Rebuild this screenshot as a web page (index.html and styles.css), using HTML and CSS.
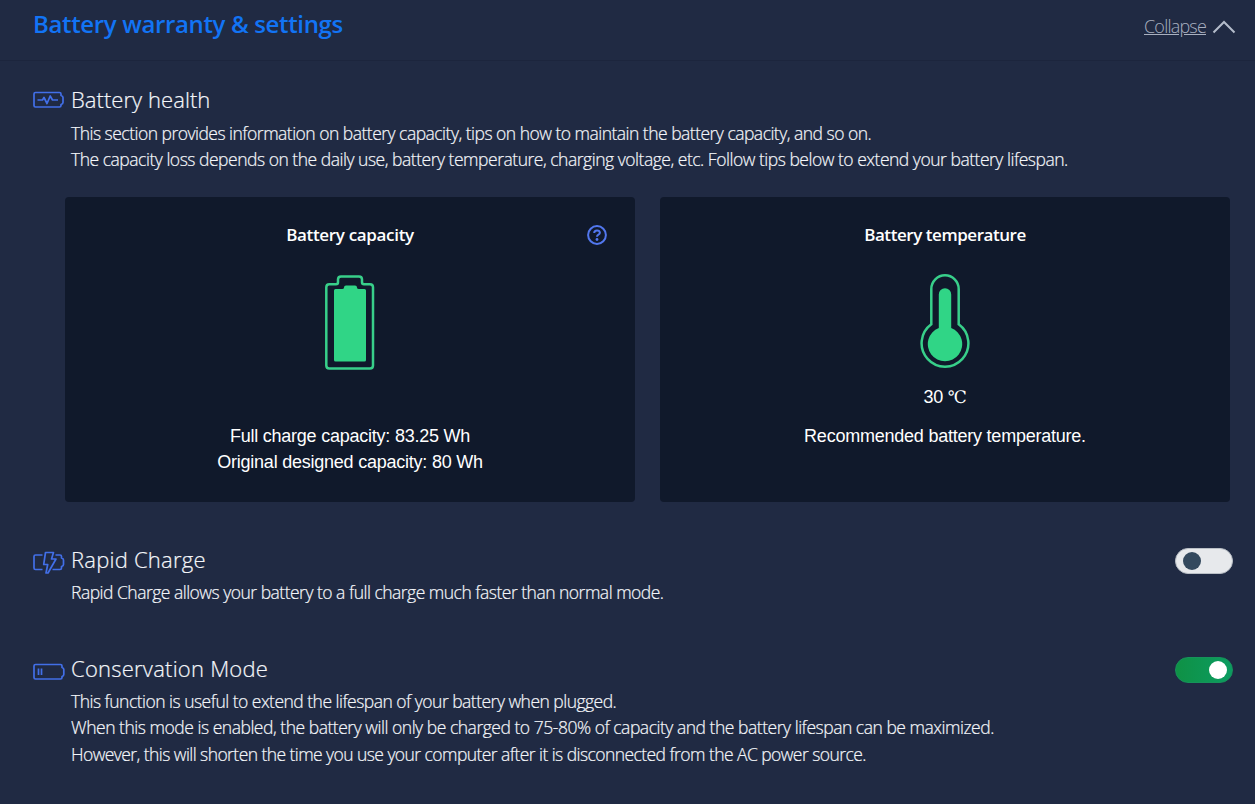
FILE: index.html
```html
<!DOCTYPE html>
<html lang="en">
<head>
<meta charset="utf-8">
<title>Battery warranty &amp; settings</title>
<link rel="stylesheet" href="styles.css">
</head>
<body>
<header class="header">
  <h1 class="header-title">Battery warranty &amp; settings</h1>
  <a class="collapse"><span class="collapse-label">Collapse</span>
    <svg class="chevron" width="24" height="14" viewBox="0 0 24 14"><path d="M1.500 12.500 12 2l10.500 10.500"/></svg>
  </a>
</header>
<main>
  <section class="setting health">
    <svg class="icon" width="33" height="18" viewBox="0 0 33 18"><path d="M3.500 1.500h24q1.500 0 1.500 1.500v1.500q2 .5 2 2v5q0 1.500-2 2V14.500q0 1.500-1.500 1.500h-24q-1.500 0-1.500-1.500V3q0-1.500 1.500-1.500z"/><path d="M5.500 9h5l1.500-2.500 3 6 3.200-7.500 2.300 4H26"/></svg>
    <div class="setting-body">
      <h2 class="setting-title t-health">Battery health</h2>
      <p class="line l1">This section provides information on battery capacity, tips on how to maintain the battery capacity, and so on.</p>
      <p class="line l2">The capacity loss depends on the daily use, battery temperature, charging voltage, etc. Follow tips below to extend your battery lifespan.</p>
    </div>
  </section>
  <div class="cards">
    <article class="card">
      <h3 class="card-title ct1">Battery capacity</h3>
      <svg class="help" width="20" height="20" viewBox="0 0 20 20"><circle cx="10" cy="10" r="8.900"/><path d="M7.200 8q0-2.600 2.800-2.600T12.900 7.800q0 1.200-1.400 1.900Q10 10.500 10 11.800"/><circle class="dot" cx="10" cy="14.500" r="1.400"/></svg>
      <svg class="picture" width="50" height="98" viewBox="0 0 50 98"><path class="outline" d="M4.300 11.300H11q2 0 2-2V6.500q0-3 3-3h18q3 0 3 3v2.800q0 2 2 2h6q3 0 3 3V92.500q0 3-3 3H4.300q-3 0-3-3V14.300q0-3 3-3z"/><path class="fill" d="M10.500 16H17q2 0 2-1.500 0-2 2-2h9q2 0 2 2 0 1.500 2 1.500h5.500q1.500 0 1.500 1.500v69.500q0 1.500-1.500 1.500h-29q-1.500 0-1.500-1.500v-69.500q0-1.500 1.500-1.500z"/></svg>
      <p class="reading"></p>
      <p class="info i1">Full charge capacity: 83.25 Wh</p>
      <p class="info i2">Original designed capacity: 80 Wh</p>
    </article>
    <article class="card">
      <h3 class="card-title ct2">Battery temperature</h3>
      <svg class="picture" width="50" height="98" viewBox="0 0 50 98"><path class="outline" d="M11.300 51.300V16a13.700 13.700 0 0 1 27.400 0v35.300a23.400 23.400 0 1 1-27.400 0z"/><path class="fill" d="M18.800 55V21.500a6.200 6.200 0 0 1 12.400 0V55a17.200 17.200 0 1 1-12.400 0z"/></svg>
      <p class="reading">30 <span class="unit">℃</span></p>
      <p class="info i3">Recommended battery temperature.</p>
    </article>
  </div>
  <section class="setting rapid">
    <svg class="icon" width="33" height="24" viewBox="0 0 33 24"><path d="M10.500 4H3.500Q2 4 2 5.500v11.500Q2 18.500 3.500 18.500h7M23.500 4h4.500q1.500 0 1.500 1.500v1.500q2 .5 2 2v4.500q0 1.500-2 2v1.500q0 1.500-1.500 1.500H20.500M13.500 1.500h8l-2 6.500h4.500l-8 14h-2l1.700-8.500h-4z"/></svg>
    <div class="setting-body">
      <h2 class="setting-title t-wide">Rapid Charge</h2>
      <p class="line l3">Rapid Charge allows your battery to a full charge much faster than normal mode.</p>
    </div>
    <div class="toggle"><i class="knob"></i></div>
  </section>
  <section class="setting conservation">
    <svg class="icon" width="33" height="18" viewBox="0 0 33 18"><path d="M3.500 1.500h25q1.500 0 1.500 1.500v1.500q1.800.5 1.800 2v5q0 1.500-1.800 2V14.500q0 1.500-1.500 1.500H3.500q-1.500 0-1.500-1.500V3q0-1.500 1.500-1.500z"/><path d="M6.500 5.500v6.500M9.500 5.500v6.500"/></svg>
    <div class="setting-body">
      <h2 class="setting-title t-wide">Conservation Mode</h2>
      <p class="line l4">This function is useful to extend the lifespan of your battery when plugged.</p>
      <p class="line l5">When this mode is enabled, the battery will only be charged to 75-80% of capacity and the battery lifespan can be maximized.</p>
      <p class="line l6">However, this will shorten the time you use your computer after it is disconnected from the AC power source.</p>
    </div>
    <div class="toggle on"><i class="knob"></i></div>
  </section>
</main>
</body>
</html>
```
FILE: styles.css
```css
* { box-sizing: border-box; margin: 0; padding: 0; }
body {
  width: 1255px; height: 804px; overflow: hidden;
  background: #202a43; color: #f4f6fa;
  font-family: "Open Sans", "Noto Sans", sans-serif;
}
svg { display: block; flex: none; fill: none; }
.header {
  display: flex; justify-content: space-between; height: 61px;
  padding: 7px 19px 0 33px; border-bottom: 1px solid #1c253d;
}
.header-title { font-size: 24px; line-height: 34px; font-weight: 600; color: #1274f5; white-space: nowrap; letter-spacing: -.35px; }
.collapse { display: flex; gap: 6px; height: 40px; color: #a9b0c0; }
.collapse-label { font-size: 18px; line-height: 38px; font-weight: 300; text-decoration: underline; letter-spacing: -.8px; }
.chevron { margin-top: 13px; stroke: #b4bccb; stroke-width: 2; }
.setting { display: flex; padding: 0 22px 0 32px; }
.icon { margin-right: 6px; stroke: #426fe8; stroke-width: 1.700; stroke-linejoin: round; }
.setting-body { flex: 1; }
.setting-title { margin-bottom: 4px; font-size: 22px; line-height: 32px; font-weight: 300; white-space: nowrap; -webkit-text-stroke: .2px currentColor; }
.t-health { letter-spacing: .05px; }
.t-wide { letter-spacing: .23px; }
.line { font-size: 17.500px; line-height: 26.400px; font-weight: 300; white-space: nowrap; -webkit-text-stroke: .2px currentColor; }
.l1 { letter-spacing: -.514px; }
.l2 { letter-spacing: -.482px; }
.l3 { letter-spacing: -.507px; }
.l4 { letter-spacing: -.52px; }
.l5 { letter-spacing: -.476px; }
.l6 { letter-spacing: -.565px; }
.health { padding-top: 22px; height: 136px; }
.health .setting-title { margin-bottom: 5px; }
.health .icon { margin-top: 8px; }
.cards { display: grid; grid-template-columns: 570px 570px; gap: 25px; padding-left: 65px; }
.card {
  position: relative; display: flex; flex-direction: column; align-items: center;
  height: 305px; padding-top: 25px; border-radius: 4px; background: #10192b; color: #fff;
}
.card-title { font-size: 17px; line-height: 26px; font-weight: 600; letter-spacing: -.33px; }
.ct2 { letter-spacing: -.45px; }
.help { position: absolute; right: 28px; top: 28px; stroke: #5277ee; stroke-width: 2; }
.help .dot { fill: #5277ee; stroke: none; }
.picture { margin-top: 25px; }
.outline { stroke: #38cf8a; stroke-width: 2.500; }
.fill { fill: #30d586; }
.reading { height: 26px; margin-top: 13px; margin-bottom: 13px; font: 18px/26px "Liberation Sans", sans-serif; letter-spacing: -.3px; }
.unit { font-family: "DejaVu Serif", serif; font-size: 17px; line-height: 1; }
.info { font: 18px/26px "Liberation Sans", sans-serif; letter-spacing: -.23px; white-space: nowrap; }
.rapid { padding-top: 41px; height: 109px; }
.rapid .icon { margin-top: 8px; }
.conservation { padding-top: 41px; }
.conservation .icon { margin-top: 11px; }
.toggle { width: 58px; height: 26px; margin-top: 5px; border-radius: 13px; background: #e7e9ec; border: 1px solid #b9bfc6; padding: 3px 7px; display: flex; }
.knob { width: 18px; height: 18px; border-radius: 50%; background: #34495e; }
.toggle.on { background: linear-gradient(90deg, #0f9145, #0b9c61); border-color: #16935a; justify-content: flex-end; padding-right: 5px; }
.toggle.on .knob { background: #fff; }
```
